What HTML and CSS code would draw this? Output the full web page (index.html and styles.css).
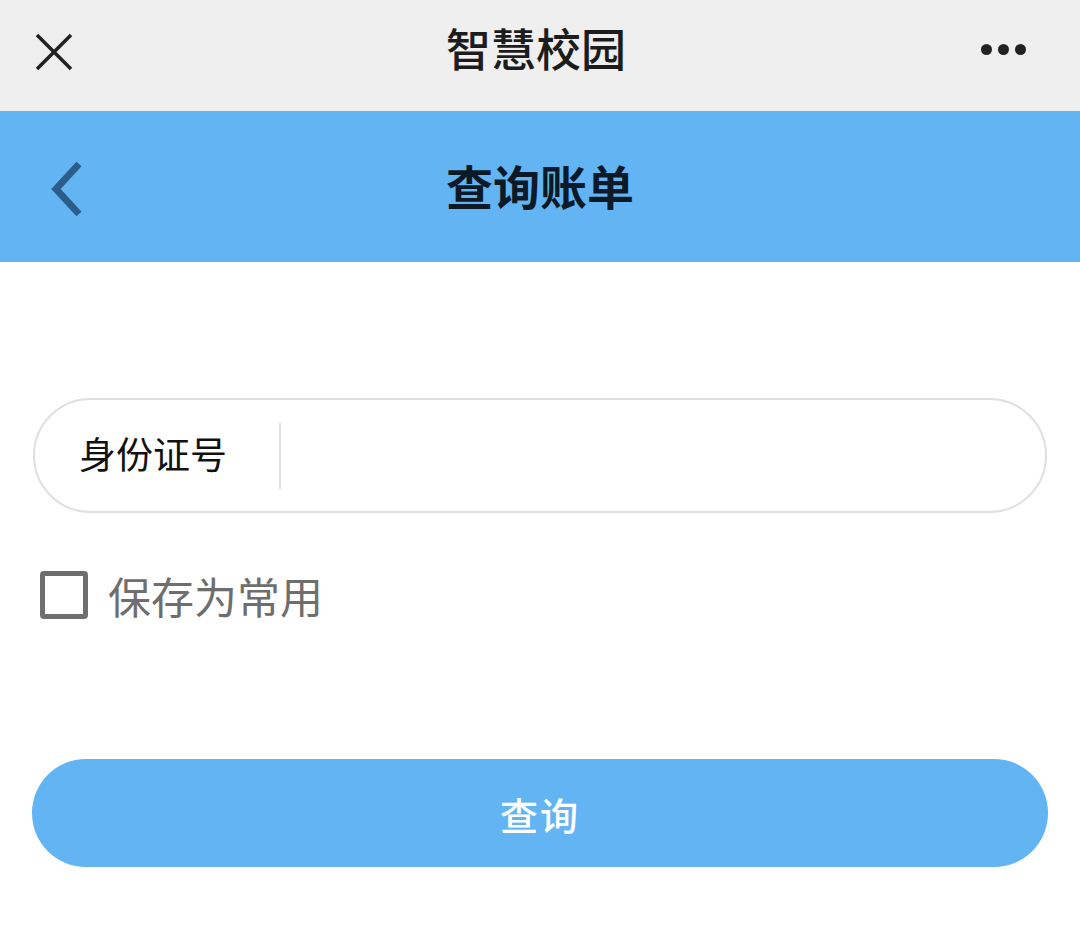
FILE: index.html
```html
<!DOCTYPE html>
<html lang="zh">
<head>
    <meta charset="UTF-8">
    <meta name="viewport" content="width=device-width, initial-scale=1.0">
    <title>查询账单</title>
    <link rel="stylesheet" href="styles.css">
</head>
<body>
    <div class="topbar">
        <div class="close">
            <svg width="40" height="40" viewBox="0 0 40 40">
                <path d="M3 3 L37 37 M37 3 L3 37" stroke="#222" stroke-width="3.5" fill="none"/>
            </svg>
        </div>
        <h1 class="app-title">智慧校园</h1>
        <div class="more">
            <span></span><span></span><span></span>
        </div>
    </div>
    <div class="header">
        <div class="back">
            <svg width="40" height="56" viewBox="0 0 40 56">
                <path d="M33 3 L10 28 L33 53" stroke="#2b5d88" stroke-width="7" fill="none"/>
            </svg>
        </div>
        <h2 class="page-title">查询账单</h2>
        <div class="back"></div>
    </div>
    <div class="content">
        <div class="field">
            <label class="field-label">身份证号</label>
            <input class="field-input" type="text">
        </div>
        <div class="save">
            <span class="checkbox"></span>
            <span class="save-text">保存为常用</span>
        </div>
        <button class="submit">查询</button>
    </div>
</body>
</html>
```

FILE: styles.css
```css
* {
    margin: 0;
    padding: 0;
    box-sizing: border-box;
}
body {
    font-family: "Noto Sans CJK SC", "Noto Sans", sans-serif;
    background-color: #fff;
    width: 1080px;
    height: 928px;
    overflow: hidden;
}
.topbar {
    height: 111px;
    background-color: #efefef;
    display: flex;
    align-items: center;
    justify-content: space-between;
    padding: 0 34px 16px 34px;
}
.close {
    width: 110px;
    display: flex;
    align-items: center;
    padding-top: 8px;
}
.app-title {
    font-size: 45px;
    font-weight: 500;
    color: #1c1c1c;
    line-height: 1;
    margin-right: 8px;
}
.more {
    width: 110px;
    display: flex;
    justify-content: flex-end;
    gap: 6px;
    padding-right: 20px;
    padding-top: 4px;
}
.more span {
    width: 11px;
    height: 11px;
    border-radius: 50%;
    background-color: #222;
}
.header {
    height: 151px;
    background-color: #63b4f3;
    display: flex;
    align-items: center;
    justify-content: space-between;
    padding: 0 0 4px 46px;
}
.back {
    width: 110px;
    display: flex;
    align-items: center;
    padding-top: 8px;
}
.page-title {
    font-size: 47px;
    font-weight: 700;
    color: #0c1a28;
    line-height: 1;
    margin-right: 46px;
}
.content {
    padding: 136px 32px 0 32px;
}
.field {
    height: 115px;
    border: 2px solid #e0e0e0;
    border-radius: 58px;
    display: flex;
    align-items: center;
    margin: 0 1px;
}
.field-label {
    font-size: 37px;
    color: #111;
    padding-left: 44px;
    width: 246px;
    height: 66px;
    line-height: 60px;
    border-right: 2px solid #e0e0e0;
}
.field-input {
    flex: 1;
    height: 66px;
    border: none;
    outline: none;
    background: transparent;
    font-size: 36px;
    padding-left: 24px;
}
.save {
    display: flex;
    align-items: center;
    margin-top: 58px;
    padding-left: 8px;
}
.checkbox {
    width: 48px;
    height: 48px;
    border: 5px solid #6e6e6e;
    border-radius: 4px;
}
.save-text {
    font-size: 43px;
    color: #6e6e6e;
    margin-left: 20px;
    line-height: 1;
}
.submit {
    display: block;
    width: 100%;
    height: 108px;
    margin-top: 140px;
    border: none;
    border-radius: 54px;
    background-color: #63b4f3;
    color: #fff;
    font-family: "Noto Sans CJK SC", "Noto Sans", sans-serif;
    font-size: 38px;
    font-weight: 500;
    letter-spacing: 2px;
}
```
